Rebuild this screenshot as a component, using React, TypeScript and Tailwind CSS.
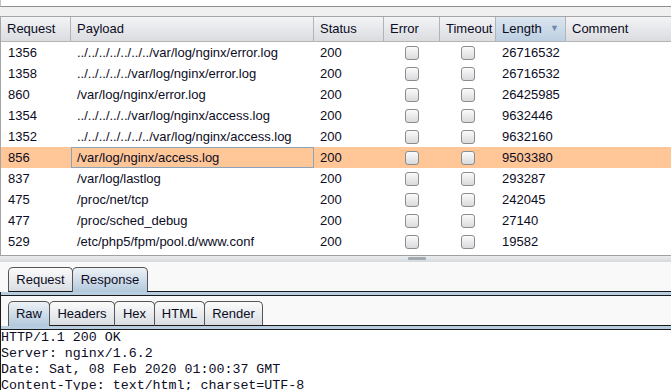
import React from "react";

type Row = {
  id: string;
  payload: string;
  status: string;
  length: string;
  selected?: boolean;
};

const rows: Row[] = [
  { id: "1356", payload: "../../../../../../../var/log/nginx/error.log", status: "200", length: "26716532" },
  { id: "1358", payload: "../../../../../var/log/nginx/error.log", status: "200", length: "26716532" },
  { id: "860", payload: "/var/log/nginx/error.log", status: "200", length: "26425985" },
  { id: "1354", payload: "../../../../../var/log/nginx/access.log", status: "200", length: "9632446" },
  { id: "1352", payload: "../../../../../../../var/log/nginx/access.log", status: "200", length: "9632160" },
  { id: "856", payload: "/var/log/nginx/access.log", status: "200", length: "9503380", selected: true },
  { id: "837", payload: "/var/log/lastlog", status: "200", length: "293287" },
  { id: "475", payload: "/proc/net/tcp", status: "200", length: "242045" },
  { id: "477", payload: "/proc/sched_debug", status: "200", length: "27140" },
  { id: "529", payload: "/etc/php5/fpm/pool.d/www.conf", status: "200", length: "19582" },
];

const responseLines = [
  "HTTP/1.1 200 OK",
  "Server: nginx/1.6.2",
  "Date: Sat, 08 Feb 2020 01:00:37 GMT",
  "Content-Type: text/html; charset=UTF-8",
];

export default function App() {
  return (
    <div
      className="flex h-[390px] w-[671px] flex-col overflow-hidden bg-[#f0f0f0] text-[13px] text-[#0c0c24]"
      style={{ fontFamily: '"Liberation Sans", Arial, sans-serif' }}
    >
      <div className="h-[7px] shrink-0 border-b border-l border-b-[#8e8e8e] border-l-[#c4c4c4] bg-white" />
      <div className="h-[9px] shrink-0" />

      <div className="shrink-0 border-l border-t border-[#a5a5a5] bg-white">
        <div className="flex h-[25px] border-b border-[#b4b4b4] bg-gradient-to-b from-[#f3f4f6] to-[#dadce0]">
          <HeaderCell width="w-[70px]">Request</HeaderCell>
          <HeaderCell width="w-[243px]">Payload</HeaderCell>
          <HeaderCell width="w-[70px]">Status</HeaderCell>
          <HeaderCell width="w-[56px]">Error</HeaderCell>
          <HeaderCell width="w-[56px]">Timeout</HeaderCell>
          <div className="flex w-[70px] shrink-0 items-center justify-between border-r border-[#b4b4b4] bg-gradient-to-b from-[#dbe6f0] to-[#bccfe1] pl-[6px] pr-[6px]">
            <span>Length</span>
            <span className="text-[9px] text-[#6f8aab]">▼</span>
          </div>
          <HeaderCell width="flex-1" last>
            Comment
          </HeaderCell>
        </div>

        {rows.map((row) => (
          <div
            key={row.id}
            className={`flex h-[21px] items-center ${row.selected ? "bg-[#ffc697]" : ""}`}
          >
            <div className="w-[70px] shrink-0 pl-[7px]">{row.id}</div>
            <div
              className={`flex h-[21px] w-[243px] shrink-0 items-center pl-[5px] ${
                row.selected ? "border border-[#8ba3bb] pl-[5px]" : "border border-transparent"
              }`}
            >
              {row.payload}
            </div>
            <div className="w-[70px] shrink-0 pl-[6px]">{row.status}</div>
            <div className="flex w-[56px] shrink-0 justify-center">
              <Checkbox />
            </div>
            <div className="flex w-[56px] shrink-0 justify-center">
              <Checkbox />
            </div>
            <div className="w-[70px] shrink-0 pl-[6px]">{row.length}</div>
            <div className="flex-1" />
          </div>
        ))}
        <div className="h-[3px]" />
      </div>

      <div className="relative h-[7px] shrink-0 border-t border-[#a0a0a0] bg-gradient-to-b from-[#e9ebed] to-[#d7dadd]">
        <div className="absolute left-[408px] top-[1px] h-[3px] w-[18px] rounded-[1px] bg-[#a4a9ae]" />
      </div>

      <div className="flex flex-1 flex-col bg-[#f9f9f9]">
        <div className="flex h-[30px] shrink-0 items-end pl-[8px]">
          <Tab width="w-[65px]">Request</Tab>
          <Tab width="w-[76px]" active>
            Response
          </Tab>
          <div className="h-px flex-1 self-end bg-[#1a1a1a]" />
        </div>
        <div className="flex shrink-0 border-l border-[#1a1a1a]">
          <div className="h-[3px] flex-1 bg-[#b9cde0]" />
        </div>
        <div className="flex flex-1 flex-col border-l border-t border-[#1a1a1a]">
          <div className="flex h-[30px] shrink-0 items-end pl-[7px]">
            <Tab width="w-[42px]" active>
              Raw
            </Tab>
            <Tab width="w-[66px]">Headers</Tab>
            <Tab width="w-[41px]">Hex</Tab>
            <Tab width="w-[51px]">HTML</Tab>
            <Tab width="w-[59px]">Render</Tab>
            <div className="h-px flex-1 self-end bg-[#1a1a1a]" />
          </div>
          <div className="h-[3px] shrink-0 bg-[#b9cde0]" />
          <div
            className="flex-1 border-t border-[#1a1a1a] bg-white pt-[0px] text-[13.3px] leading-[16px] text-[#0c0c24]"
            style={{ fontFamily: '"Liberation Mono", "Courier New", monospace' }}
          >
            {responseLines.map((line) => (
              <div key={line} className="whitespace-pre">
                {line}
              </div>
            ))}
          </div>
        </div>
      </div>
    </div>
  );
}

function HeaderCell({
  width,
  children,
  last,
}: {
  width: string;
  children: React.ReactNode;
  last?: boolean;
}) {
  return (
    <div
      className={`flex ${width} shrink-0 items-center pl-[6px] ${
        last ? "" : "border-r border-[#b4b4b4]"
      }`}
    >
      {children}
    </div>
  );
}

function Checkbox() {
  return (
    <div className="h-[14px] w-[14px] rounded-[3px] border border-[#8c8c8c] bg-gradient-to-b from-[#fbfbfb] to-[#d9dadc]" />
  );
}

function Tab({
  width,
  active,
  children,
}: {
  width: string;
  active?: boolean;
  children: React.ReactNode;
}) {
  return (
    <div
      className={`-mr-px flex h-[25px] ${width} shrink-0 items-center justify-center rounded-t-[5px] border border-[#555] ${
        active
          ? "border-b-0 bg-gradient-to-b from-[#eef2f6] to-[#b2c8dc]"
          : "border-b-[#1a1a1a] bg-gradient-to-b from-[#fbfbfb] to-[#d9dde2]"
      }`}
    >
      {children}
    </div>
  );
}
